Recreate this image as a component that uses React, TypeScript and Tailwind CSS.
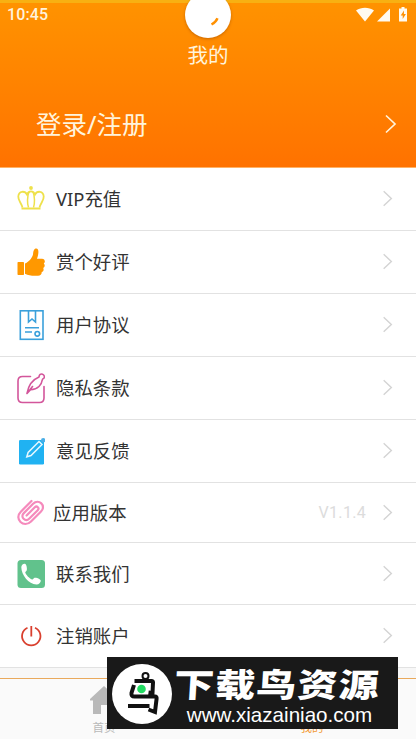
import type { ReactNode } from "react";

function Chevron({ className }: { className: string }) {
  return (
    <svg viewBox="0 0 12 20" className={className} fill="none" stroke="currentColor" strokeWidth="1.7">
      <path d="M1.5 1.5 10.5 10l-9 8.5" />
    </svg>
  );
}

function StatusBar() {
  return (
    <div className="flex h-[28px] items-center justify-between border-t-[3px] border-[#f8b012] px-[7px] pb-[2px]">
      <span className="font-['Roboto',sans-serif] text-[16px] font-medium leading-none tracking-[0.1px] text-[#fff3dc]">10:45</span>
      <svg width="54" height="16" viewBox="0 0 54 16" fill="#fffaf0">
        <path d="M1 3.4C6.3-.2 13.7-.2 19 3.4L10 14.4Z" />
        <path d="M35 1.4V14.4H22Z" />
        <path fillRule="evenodd" d="M46.5 0h3v1.4H52V14.4H44V1.4h2.5ZM49 3.5 45.7 8.500h2V12l3.200-5h-2Z" />
      </svg>
    </div>
  );
}

function Header() {
  return (
    <header className="relative h-[168px] border-b border-[#ffb266] bg-linear-to-b from-[#ff9300] to-[#ff7200] text-[#fff4dc]">
      <StatusBar />
      {/* pull-to-refresh spinner */}
      <div className="absolute left-[185px] top-[-8px] size-[46px] rounded-full bg-white shadow-[0_1px_3px_rgba(120,50,0,0.4)]">
        <svg viewBox="0 0 46 46" className="size-full" fill="none" stroke="#ff9000" strokeWidth="2.4">
          <path d="M32.5 26.3q-1.5 3.8-6 6.2" />
        </svg>
      </div>
      <h1 className="mt-[13px] text-center text-[20.5px] leading-[28px]">我的</h1>
      <div className="mt-[35px] flex h-[40px] items-center justify-between pl-[36px] pr-[19px]">
        <span className="pt-px text-[25.5px] leading-none">登录/注册</span>
        <Chevron className="h-[20px] w-[13px]" />
      </div>
    </header>
  );
}

function CrownIcon() {
  return (
    <svg viewBox="0 0 28 28" className="size-7" fill="none" stroke="#eee14b" strokeWidth="1.8">
      <circle cx="14" cy="3" r="1.9" fill="#eee14b" stroke="none" />
      <path d="M5.5 22.5C4.5 18 1 15.5 1.3 11.5 1.7 5.500 8 5.600 10 9.500c.8-2.500 2-3.200 4-3.200s3.200.7 4 3.200c2-3.900 8.300-4 8.700 2 .3 4-3.200 6.500-4.200 11" />
      <path d="M12 7c-2 4-1.800 12-.5 15.500M16 7c2 4 1.800 12 .5 15.500" strokeWidth="1.5" />
      <path d="M4.5 23.500h19" strokeWidth="2" />
    </svg>
  );
}

function ThumbIcon() {
  return (
    <svg viewBox="0 0 28 28" className="size-7" fill="#ff9800">
      <rect x="0.5" y="14" width="6.5" height="13" rx=".7" />
      <path d="M8 15.5c3.500-1.300 7-5.300 8-9C16.300 3 17 .5 19.200.5c3.300 0 2.300 6 .8 10.300h5c2.800 0 3.800 3.300 1.800 4.700 1.500 1.500 1 3.700-.6 4.400 1 1.700.1 3.700-1.500 4.100.2 2.200-1.200 3.500-3.700 3.700-5.500.4-9.500-.2-13-2Z" />
    </svg>
  );
}

function AgreementIcon() {
  return (
    <svg viewBox="0 0 28 32" className="h-8 w-7" fill="none" stroke="#3aa0db" strokeWidth="1.6">
      <rect x="3.3" y="1.8" width="22.7" height="28.5" />
      <path d="M11.500 2v11l3.500-3 3.500 3V2M8 18.800h14M8 23h7" />
      <circle cx="20.3" cy="24.8" r="2.3" />
    </svg>
  );
}

function PrivacyIcon() {
  return (
    <svg viewBox="0 0 28 32" className="h-8 w-7" fill="none" stroke="#d3569b" strokeWidth="1.6" strokeLinecap="round" strokeLinejoin="round">
      <path d="M13.500 4.500H5.500q-4.500 0-4.500 4.500v17q0 4.500 4.500 4.500h17q4.500 0 4.500-4.500V14.500" />
      <path d="M10 21.500c1-6 3.500-13 12-16.500.2-2.500 1.800-3.500 3.500-2.800 2 .8 2.300 2.700 1.300 4-1.300.3-1.500 1.300-1.700 2.300-.4 3.800-4 9-11.600 9.300Zm0 0 5.500-7" />
    </svg>
  );
}

function FeedbackIcon() {
  return (
    <svg viewBox="0 0 28 28" className="size-7">
      <rect x="2" y="3" width="25" height="24.5" rx="1.2" fill="#20b2f2" />
      <path d="m22 4.500 3 3L14 18.500l-4.200 1.300 1.300-4.300Z" fill="none" stroke="#e5f8ff" strokeWidth="1.5" />
      <circle cx="26.2" cy="3.3" r="2.2" fill="#4aaee6" />
    </svg>
  );
}

function ClipIcon() {
  return (
    <svg viewBox="0 0 28 28" className="size-7" fill="none" stroke="#f58abc" strokeWidth="2.2" strokeLinecap="round">
      <path d="M14.500 2 3.800 12.700c-7.200 7.200 3 17 10.200 9.800l10-10c5.700-5.700-2.300-13.300-7.900-7.700l-9.300 9.300c-4 4 1.600 9.400 5.600 5.400l8.300-8.300c2.100-2.100-.8-5-2.900-2.900l-8.200 8.200" />
    </svg>
  );
}

function PhoneIcon() {
  return (
    <svg viewBox="0 0 28 28" className="size-7">
      <rect x=".5" width="27.5" height="28" rx="3.5" fill="#61c28c" />
      <path d="M4.300 7.300C4.300 5 6.100 3.500 7.800 3.700c1.900.3 2.700 5.900 1.700 7.100l-1.300 1.400c.9 3 4.200 6.300 7.400 7.400l1.500-1.500c1.300-1.200 6.700 1 6.700 2.700 0 1.900-2 3.800-4.300 3.700C11.500 24.200 4.500 15 4.300 7.300Z" fill="white" />
    </svg>
  );
}

function PowerIcon() {
  return (
    <svg viewBox="0 0 28 28" className="size-7" fill="none" stroke="#d9402f" strokeWidth="1.8">
      <path d="M10.500 5.700a9.200 9.200 0 1 0 7.500 0M14.300 4v10.500" />
    </svg>
  );
}

type Item = { label: string; icon: ReactNode; row: string; extra?: string };

const items: Item[] = [
  { label: "VIP充值", icon: <CrownIcon />, row: "h-[63px] gap-[11px]" },
  { label: "赏个好评", icon: <ThumbIcon />, row: "h-[63px] gap-[11px]" },
  { label: "用户协议", icon: <AgreementIcon />, row: "h-[63px] gap-[11px]" },
  { label: "隐私条款", icon: <PrivacyIcon />, row: "h-[63px] gap-[11px]" },
  { label: "意见反馈", icon: <FeedbackIcon />, row: "h-[63px] gap-[11px]" },
  { label: "应用版本", icon: <ClipIcon />, row: "h-[60px] gap-[8px]", extra: "V1.1.4" },
  { label: "联系我们", icon: <PhoneIcon />, row: "h-[62px] gap-[11px]" },
  { label: "注销账户", icon: <PowerIcon />, row: "h-[63px] gap-[11px]" },
];

function MenuRow({ label, icon, row, extra }: Item) {
  return (
    <li className={`flex items-center border-b border-[#e2e2e2] bg-white pl-[17px] pr-[23px] ${row}`}>
      {icon}
      <span className="flex-1 pt-px text-[18.4px] leading-none text-[#333]">{label}</span>
      {extra && (
        <span className="mr-[8px] pt-px font-['Roboto',sans-serif] text-[16px] leading-none tracking-[0.3px] text-[#dcdcdc]">{extra}</span>
      )}
      <Chevron className="mb-px h-[17px] w-[11px] text-[#d4d4d4]" />
    </li>
  );
}

function TabBar() {
  return (
    <nav className="flex flex-1 border-t border-[#e9a95c] bg-[#fafafa] text-[11.5px] leading-none">
      <div className="flex flex-1 flex-col items-center pt-[7px] text-[#b9b9b9]">
        <svg viewBox="0 0 30 28" className="h-[28px] w-[30px]" fill="currentColor">
          <path d="M15 0 29 13v1.500h-3V28h-8v-9h-6v9H4V14.500H1V13Z" />
        </svg>
        <span className="mt-[8px]">首页</span>
      </div>
      <div className="flex flex-1 flex-col items-center pt-[43px] text-[#f39a35]">我的</div>
    </nav>
  );
}

function Watermark() {
  return (
    <div className="absolute left-[107px] top-[657px] flex h-[72px] w-[291px] items-center bg-[#191919] pl-[5px] pt-px text-white">
      <svg viewBox="0 0 60 60" className="size-[60px] shrink-0" fill="none" stroke="#111" strokeWidth="4">
        <circle cx="30" cy="30" r="30" fill="white" stroke="none" />
        <circle cx="33.5" cy="12" r="3" strokeWidth="2" />
        <path d="M22.500 17h17q1.500 0 1.500 1.500l-.5 10.500-4-.5M22 21l-2.500 8q-.6 3.500 3 3.500h20.500q1.800 0 1.600 2L43 48l-6.500-2.500M16 42h21.500" />
        <circle cx="29.5" cy="25" r="4.3" fill="#22dc62" stroke="none" />
      </svg>
      <div className="flex w-[215px] flex-col items-center pt-[6px]">
        <span className="mr-[6px] -skew-x-3 scale-y-82 whitespace-nowrap text-[40px] font-black leading-[36px] tracking-[1.2px]">下载鸟资源</span>
        <span className="font-['Liberation_Sans',Arial,sans-serif] text-[20.6px] leading-[24px]">www.xiazainiao.com</span>
      </div>
    </div>
  );
}

export default function App() {
  return (
    <div className="relative flex h-[739px] w-[416px] flex-col overflow-hidden bg-[#f7f7f7] font-['Noto_Sans','Noto_Sans_CJK_SC',sans-serif]">
      <Header />
      <ul className="mb-[10px]">
        {items.map((item) => (
          <MenuRow key={item.label} {...item} />
        ))}
      </ul>
      <TabBar />
      <Watermark />
    </div>
  );
}
